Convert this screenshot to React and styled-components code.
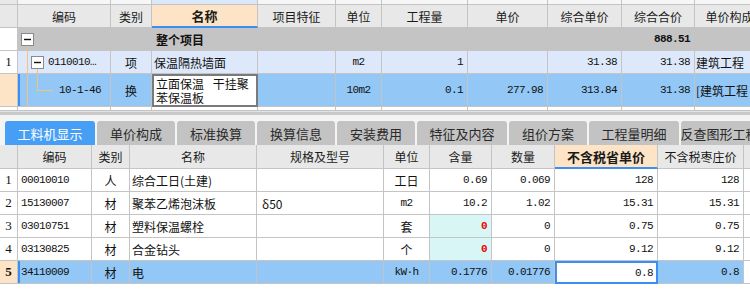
import React from 'react';
import styled, { createGlobalStyle, css } from 'styled-components';

const GlobalStyle = createGlobalStyle`
  html, body {
    margin: 0;
    padding: 0;
    background: #ffffff;
  }
  body {
    font-family: "Noto Sans CJK SC", "Noto Sans", sans-serif;
    font-size: 12px;
    color: #111;
  }
`;

const TOP_COLS = '18px 93px 41px 106px 78px 46px 86px 80px 74px 73px 70px';
const BOTTOM_COLS = '18px 74px 38px 127px 127px 46px 62px 63px 103px 86px 1fr';

const LINE = '#c4c4c4';
const BLUE = '#3b8ef2';
const PEACH = '#fde4c6';
const SELECTED = '#92c7f6';

const Page = styled.div`
  width: 750px;
  height: 296px;
  overflow: hidden;
  display: flex;
  flex-direction: column;
  background: #fff;
`;

const Grid = styled.div`
  display: flex;
  flex-direction: column;
`;

const Row = styled.div`
  display: grid;
  grid-template-columns: ${({ $cols }) => $cols};
  height: ${({ $h }) => $h}px;
  background: ${({ $bg }) => $bg || 'transparent'};
`;

const Cell = styled.div`
  box-sizing: border-box;
  display: flex;
  align-items: center;
  justify-content: ${({ $align }) =>
    $align === 'right' ? 'flex-end' : $align === 'center' ? 'center' : 'flex-start'};
  padding: 0 ${({ $pad }) => ($pad === undefined ? 4 : $pad)}px;
  border-right: 1px solid ${LINE};
  border-bottom: 1px solid ${LINE};
  background: ${({ $bg }) => $bg || 'transparent'};
  white-space: nowrap;
  overflow: hidden;
  font-weight: ${({ $bold }) => ($bold ? 700 : 400)};
  color: ${({ $color }) => $color || '#111'};
  ${({ $mono }) =>
    $mono &&
    css`
      font-family: "Liberation Mono", "DejaVu Sans Mono", monospace;
      font-size: 11px;
      letter-spacing: -0.6px;
    `}
  ${({ $mark }) =>
    $mark &&
    css`
      box-shadow: inset 2px 0 0 ${BLUE};
    `}
`;

const HeadCell = styled(Cell)`
  justify-content: center;
  background: ${({ $active }) => ($active ? PEACH : '#e8e8e8')};
  font-weight: ${({ $active }) => ($active ? 700 : 400)};
  color: #1a1a1a;
  font-size: ${({ $active }) => ($active ? 13 : 12)}px;
  ${({ $active }) =>
    $active &&
    css`
      border-bottom: 2px solid ${BLUE};
    `}
`;

const NumCell = styled(Cell)`
  justify-content: center;
  padding: 0;
  font-family: "Liberation Serif", "DejaVu Serif", serif;
  font-size: 13px;
  background: ${({ $bg }) => $bg || '#fff'};
  font-weight: ${({ $bold }) => ($bold ? 700 : 400)};
`;

const EditName = styled.div`
  box-sizing: border-box;
  border: 2px solid #7a7a7a;
  border-bottom-width: 2px;
  background: #fff;
  padding: 0 2px;
  line-height: 14px;
  display: flex;
  flex-direction: column;
  justify-content: center;
  white-space: nowrap;
  overflow: hidden;
`;

const EditValue = styled(Cell)`
  background: #fff;
  border: 2px solid ${BLUE};
  padding-right: 3px;
`;

const NameLine = styled.span`
  display: block;
  word-spacing: 6px;
`;

const Splitter = styled.div`
  height: 3px;
  background: #c9c9c9;
  border-top: 1px solid #e2e2e2;
`;

const TabBar = styled.div`
  display: flex;
  gap: 2px;
  padding: 6px 0 0 5px;
  background: #f4f4f4;
  height: 24px;
`;

const Tab = styled.div`
  flex: 0 0 ${({ $w }) => $w}px;
  height: 24px;
  display: flex;
  align-items: center;
  justify-content: center;
  border-radius: 3px 3px 0 0;
  background: ${({ $active }) => ($active ? '#479ef5' : '#c3c3c3')};
  color: ${({ $active }) => ($active ? '#fff' : '#2a2a2a')};
  font-size: 13px;
  white-space: nowrap;
  overflow: hidden;
`;

const CodeText = styled.span`
  font-family: "Liberation Mono", "DejaVu Sans Mono", monospace;
  font-size: 11px;
  letter-spacing: -0.6px;
`;

const Guide = styled.svg`
  flex: 0 0 auto;
  display: block;
`;

function TreeGuide({ kind, h }) {
  const orange = '#f6c27a';
  if (kind === 'root') {
    return (
      <Guide width="22" height={h}>
        <line x1="9.5" y1="17" x2="9.5" y2={h} stroke={orange} />
        <rect x="3.5" y="5.5" width="12" height="12" fill="#fff" stroke="#8a8a8a" />
        <line x1="6" y1="11.5" x2="13" y2="11.5" stroke="#111" strokeWidth="1.4" />
      </Guide>
    );
  }
  if (kind === 'branch') {
    return (
      <Guide width="30" height={h}>
        <line x1="9.5" y1="0" x2="9.5" y2={h} stroke={orange} />
        <line x1="19.5" y1="17" x2="19.5" y2={h} stroke={orange} />
        <rect x="13.5" y="5.5" width="12" height="12" fill="#fff" stroke="#8a8a8a" />
        <line x1="16" y1="11.5" x2="23" y2="11.5" stroke="#111" strokeWidth="1.4" />
      </Guide>
    );
  }
  return (
    <Guide width="41" height={h}>
      <line x1="9.5" y1="0" x2="9.5" y2={h} stroke={orange} />
      <line x1="19.5" y1="0" x2="19.5" y2="16.5" stroke={orange} />
      <line x1="19.5" y1="16.5" x2="35" y2="16.5" stroke={orange} />
    </Guide>
  );
}

const topHeaders = ['编码', '类别', '名称', '项目特征', '单位', '工程量', '单价', '综合单价', '综合合价', '单价构成'];

const tabs = [
  ['工料机显示', 90],
  ['单价构成', 78],
  ['标准换算', 78],
  ['换算信息', 78],
  ['安装费用', 78],
  ['特征及内容', 90],
  ['组价方案', 78],
  ['工程量明细', 90],
  ['反查图形工程量', 90],
];

const bottomHeaders = ['编码', '类别', '名称', '规格及型号', '单位', '含量', '数量', '不含税省单价', '不含税枣庄价'];

const materials = [
  { code: '00010010', type: '人', name: '综合工日(土建)', spec: '', unit: '工日', qty: '0.69', amount: '0.069', price: '128', zz: '128' },
  { code: '15130007', type: '材', name: '聚苯乙烯泡沫板', spec: 'δ50', unit: 'm2', qty: '10.2', amount: '1.02', price: '15.31', zz: '15.31' },
  { code: '03010751', type: '材', name: '塑料保温螺栓', spec: '', unit: '套', qty: '0', amount: '0', price: '0.75', zz: '0.75', zero: true },
  { code: '03130825', type: '材', name: '合金钻头', spec: '', unit: '个', qty: '0', amount: '0', price: '9.12', zz: '9.12', zero: true },
  { code: '34110009', type: '材', name: '电', spec: '', unit: 'kW·h', qty: '0.1776', amount: '0.01776', price: '0.8', zz: '0.8', selected: true },
];

function TopGrid() {
  return (
    <Grid>
      <Row $cols={TOP_COLS} $h={5}>
        <Cell $bg="#e8e8e8" />
        <Cell $bg="#f6f6f6" />
        <Cell $bg="#f6f6f6" />
        <Cell $bg="#dbe8f7" />
        {Array.from({ length: 7 }).map((_, i) => (
          <Cell key={i} $bg="#f6f6f6" />
        ))}
      </Row>
      <Row $cols={TOP_COLS} $h={23}>
        <HeadCell />
        {topHeaders.map((h) => (
          <HeadCell key={h} $active={h === '名称'}>
            {h}
          </HeadCell>
        ))}
      </Row>
      <Row $cols={TOP_COLS} $h={23} $bg="#c4c4c4">
        <NumCell />
        <Cell $pad={0}>
          <TreeGuide kind="root" h={22} />
        </Cell>
        <Cell />
        <Cell $bold>整个项目</Cell>
        <Cell />
        <Cell />
        <Cell />
        <Cell />
        <Cell />
        <Cell $mono $bold $align="right">888.51</Cell>
        <Cell />
      </Row>
      <Row $cols={TOP_COLS} $h={23} $bg="#dde9fb">
        <NumCell>1</NumCell>
        <Cell $pad={0}>
          <TreeGuide kind="branch" h={22} />
          <CodeText>0110010…</CodeText>
        </Cell>
        <Cell $align="center">项</Cell>
        <Cell $pad={2}>保温隔热墙面</Cell>
        <Cell />
        <Cell $mono $align="center">m2</Cell>
        <Cell $mono $align="right">1</Cell>
        <Cell />
        <Cell $mono $align="right">31.38</Cell>
        <Cell $mono $align="right">31.38</Cell>
        <Cell $pad={1}>建筑工程</Cell>
      </Row>
      <Row $cols={TOP_COLS} $h={33} $bg={SELECTED}>
        <NumCell $bg={PEACH} />
        <Cell $pad={0} $mark>
          <TreeGuide kind="leaf" h={32} />
          <CodeText>10-1-46</CodeText>
        </Cell>
        <Cell $align="center">换</Cell>
        <EditName>
          <NameLine>立面保温 干挂聚</NameLine>
          <NameLine>苯保温板</NameLine>
        </EditName>
        <Cell />
        <Cell $mono $align="center">10m2</Cell>
        <Cell $mono $align="right">0.1</Cell>
        <Cell $mono $align="right">277.98</Cell>
        <Cell $mono $align="right">313.84</Cell>
        <Cell $mono $align="right">31.38</Cell>
        <Cell $pad={1}>[建筑工程</Cell>
      </Row>
      <Row $cols={TOP_COLS} $h={4} $bg="#fff">
        {Array.from({ length: 11 }).map((_, i) => (
          <Cell key={i} />
        ))}
      </Row>
    </Grid>
  );
}

function BottomGrid() {
  return (
    <Grid>
      <Row $cols={BOTTOM_COLS} $h={24}>
        <HeadCell />
        {bottomHeaders.map((h) => (
          <HeadCell key={h} $active={h === '不含税省单价'}>
            {h}
          </HeadCell>
        ))}
        <HeadCell />
      </Row>
      {materials.map((m, i) => {
        const bg = m.selected ? SELECTED : '#fff';
        return (
          <Row key={m.code} $cols={BOTTOM_COLS} $h={23} $bg={bg}>
            <NumCell $bg={m.selected ? PEACH : '#fff'} $bold={m.selected}>
              {i + 1}
            </NumCell>
            <Cell $mono $pad={3} $mark={m.selected}>{m.code}</Cell>
            <Cell $align="center">{m.type}</Cell>
            <Cell $pad={2}>{m.name}</Cell>
            <Cell $pad={5}>{m.spec}</Cell>
            <Cell $align="center" $mono={m.unit === 'm2' || m.unit === 'kW·h'}>
              {m.unit}
            </Cell>
            <Cell
              $mono
              $align="right"
              $bg={m.zero ? '#d9f6f6' : undefined}
              $bold={m.zero}
              $color={m.zero ? '#f00000' : undefined}
            >
              {m.qty}
            </Cell>
            <Cell $mono $align="right">{m.amount}</Cell>
            {m.selected ? (
              <EditValue $mono $align="right">{m.price}</EditValue>
            ) : (
              <Cell $mono $align="right">{m.price}</Cell>
            )}
            <Cell $mono $align="right">{m.zz}</Cell>
            <Cell $bg="#fff" />
          </Row>
        );
      })}
    </Grid>
  );
}

export default function App() {
  return (
    <Page>
      <GlobalStyle />
      <TopGrid />
      <Splitter />
      <TabBar>
        {tabs.map(([label, w], i) => (
          <Tab key={label} $w={w} $active={i === 0}>
            {label}
          </Tab>
        ))}
      </TabBar>
      <BottomGrid />
    </Page>
  );
}
